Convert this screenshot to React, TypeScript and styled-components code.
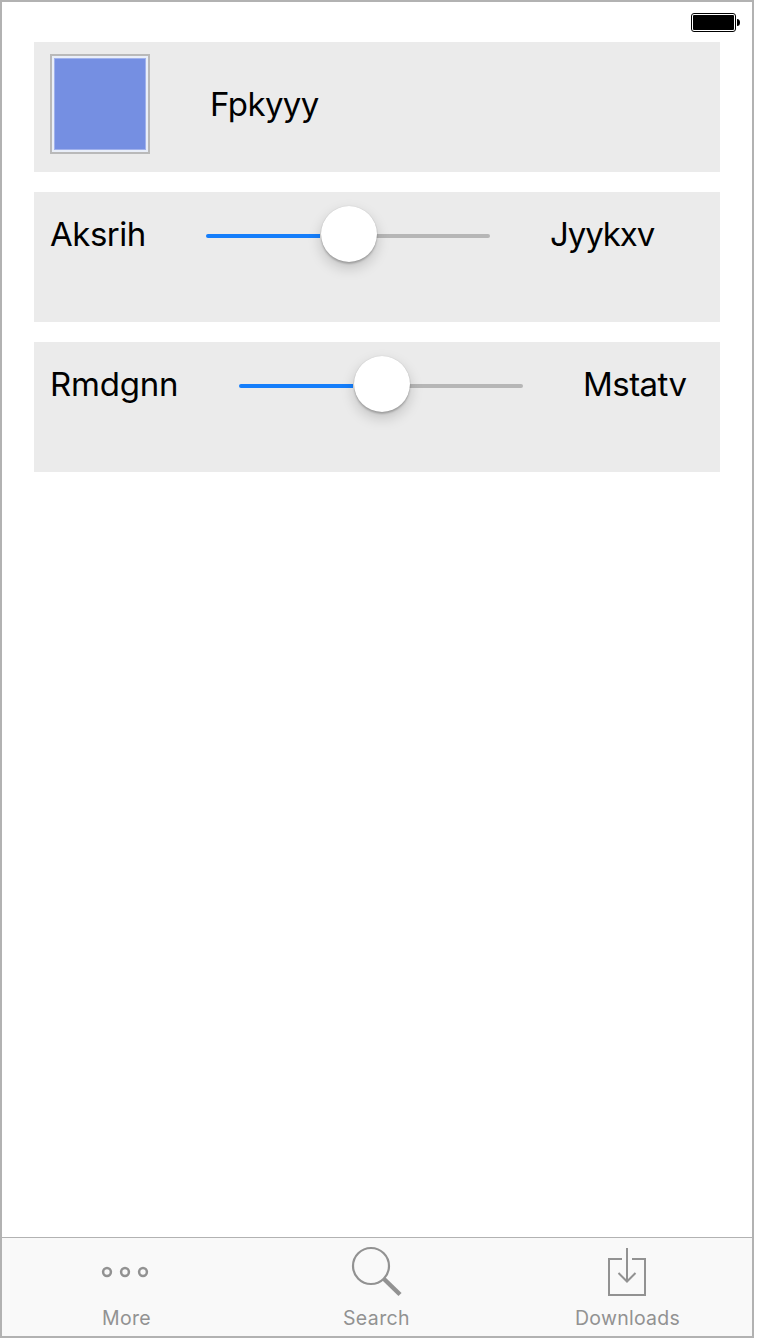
import React from "react";
import styled, { createGlobalStyle } from "styled-components";

const GlobalStyle = createGlobalStyle`
  *, *::before { box-sizing: border-box; }
  body { margin: 0; background: #fff; font-family: Inter, "Liberation Sans", sans-serif; }
`;

const Screen = styled.div`
  display: flex;
  flex-direction: column;
  width: 754px;
  height: 1338px;
  border: 2px solid #b2b2b2;
  background: #fff;
`;

const StatusBar = styled.header`
  display: flex;
  justify-content: flex-end;
  height: 40px;
  padding: 10px 12px 0 0;
`;

const Content = styled.main`
  display: flex;
  flex: 1;
  flex-direction: column;
  gap: 20px;
  padding: 0 32px;
`;

const Panel = styled.section`
  display: flex;
  align-items: flex-start;
  gap: 60px;
  height: 130px;
  padding: 12px 16px;
  background: #ebebeb;
`;

const Swatch = styled.div`
  width: 100px;
  height: 100px;
  padding: 2px;
  border: 2px solid #b9b9b9;
  background: #e9eef8;

  &::before {
    content: "";
    display: block;
    width: 92px;
    height: 92px;
    border: 1px solid #a0b1ec;
    background: #758fe2;
  }
`;

const Label = styled.span<{ $width: number; $spacing: number; $top?: number }>`
  flex: none;
  width: ${(p) => p.$width}px;
  margin-top: ${(p) => p.$top ?? 10}px;
  color: #000;
  font-size: 33px;
  line-height: 40px;
  letter-spacing: ${(p) => p.$spacing}px;
  white-space: nowrap;
`;

const Slider = styled.div`
  display: flex;
  flex: none;
  align-items: center;
  width: 284px;
  height: 64px;
`;

const Track = styled.div<{ $filled?: boolean }>`
  flex: 1;
  height: 4px;
  border-radius: ${(p) => (p.$filled ? "2px 0 0 2px" : "0 2px 2px 0")};
  background: ${(p) => (p.$filled ? "#157efb" : "#b6b6b6")};
`;

const Thumb = styled.div`
  z-index: 1;
  flex: none;
  width: 56px;
  height: 56px;
  margin: 0 -1px 4px 1px;
  border-radius: 50%;
  background: #fff;
  box-shadow: 0 0 1px rgba(0, 0, 0, 0.2), 0 2px 2px rgba(0, 0, 0, 0.2), 0 6px 14px rgba(0, 0, 0, 0.18);
`;

const TabBar = styled.nav`
  display: grid;
  grid-template-columns: 248px 252px 250px;
  height: 99px;
  border-top: 1px solid #b2b2b2;
  background: #f9f9f9;
`;

const Tab = styled.div`
  display: flex;
  flex-direction: column;
  align-items: center;
  padding-top: 8px;
  color: #929292;
`;

const TabIcon = styled.svg`
  display: block;
  width: 52px;
  height: 52px;
  fill: none;
  stroke: currentColor;
`;

const TabLabel = styled.span<{ $spacing: number }>`
  margin-top: 8px;
  padding-left: 1px;
  font-size: 19.5px;
  line-height: 24px;
  letter-spacing: ${(p) => p.$spacing}px;
`;

function Battery() {
  return (
    <svg width="50" height="20" viewBox="0 0 50 20">
      <rect x="1.5" y="1.5" width="44" height="18" rx="2.5" fill="#fff" stroke="#000" />
      <rect x="3" y="3" width="41" height="15" rx="1" />
      <path d="M47 7q3 0 3 3.5t-3 3.5z" />
    </svg>
  );
}

function HalfSlider() {
  return (
    <Slider>
      <Track $filled />
      <Thumb />
      <Track />
    </Slider>
  );
}

export default function App() {
  return (
    <>
      <GlobalStyle />
      <Screen>
        <StatusBar>
          <Battery />
        </StatusBar>
        <Content>
          <Panel>
            <Swatch />
            <Label $width={110} $spacing={-0.65} $top={30}>Fpkyyy</Label>
          </Panel>
          <Panel>
            <Label $width={96} $spacing={-0.5}>Aksrih</Label>
            <HalfSlider />
            <Label $width={105} $spacing={-1.1}>Jyykxv</Label>
          </Panel>
          <Panel>
            <Label $width={129} $spacing={-0.2}>Rmdgnn</Label>
            <HalfSlider />
            <Label $width={105} $spacing={-0.55}>Mstatv</Label>
          </Panel>
        </Content>
        <TabBar>
          <Tab>
            <TabIcon viewBox="0 0 52 52" strokeWidth="2.5">
              <circle cx="7" cy="26" r="3.9" />
              <circle cx="25" cy="26" r="3.9" />
              <circle cx="43" cy="26" r="3.9" />
            </TabIcon>
            <TabLabel $spacing={0.35}>More</TabLabel>
          </Tab>
          <Tab>
            <TabIcon viewBox="0 0 52 52" strokeWidth="2.2">
              <circle cx="21" cy="20" r="18" />
              <path d="M33.5 32.5 50 48.5" strokeWidth="4.4" />
            </TabIcon>
            <TabLabel $spacing={0.4}>Search</TabLabel>
          </Tab>
          <Tab>
            <TabIcon viewBox="0 0 52 52" strokeWidth="2">
              <path d="M21 13H8v36h36V13H31M26 2v33M17.5 27l8.5 8.5 8.5-8.5" />
            </TabIcon>
            <TabLabel $spacing={0.25}>Downloads</TabLabel>
          </Tab>
        </TabBar>
      </Screen>
    </>
  );
}
